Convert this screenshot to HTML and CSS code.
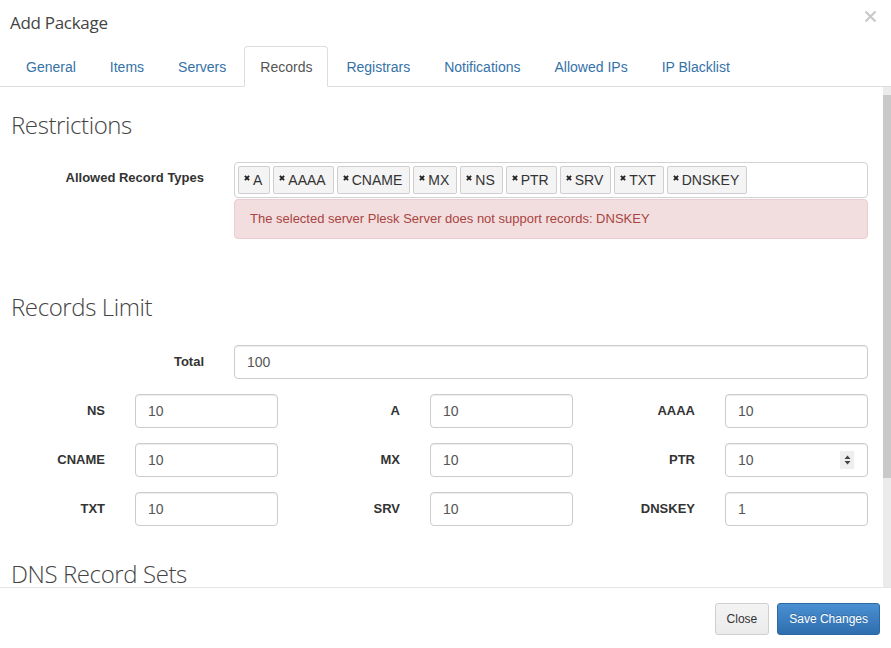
FILE: index.html
```html
<!DOCTYPE html>
<html lang="en">
<head>
<meta charset="utf-8">
<title>Add Package</title>
<link rel="stylesheet" href="styles.css">
</head>
<body>
<div class="modal">
  <header class="modal-header">
    <div class="title-row">
      <h4 class="modal-title">Add Package</h4>
      <button class="close" type="button" aria-label="Close">
        <svg width="13" height="13" viewBox="0 0 13 13"><path d="M1.5 1.5L11.5 11.5M11.5 1.5L1.5 11.5" stroke="#c9c9c9" stroke-width="2.2" fill="none"/></svg>
      </button>
    </div>
    <ul class="nav-tabs">
      <li><a>General</a></li>
      <li><a>Items</a></li>
      <li><a>Servers</a></li>
      <li class="active"><a>Records</a></li>
      <li><a>Registrars</a></li>
      <li><a>Notifications</a></li>
      <li><a>Allowed IPs</a></li>
      <li><a>IP Blacklist</a></li>
    </ul>
  </header>

  <div class="body-wrap">
    <div class="modal-body">
      <h3 class="section-title first">Restrictions</h3>
      <div class="form-row types-row">
        <label class="control-label">Allowed Record Types</label>
        <div class="field">
          <div class="tag-box">
            <span class="tag"><svg class="tag-x" width="6" height="6" viewBox="0 0 6 6"><path d="M0.9 0.9L5.1 5.1M5.1 0.9L0.9 5.1"/></svg>A</span>
            <span class="tag"><svg class="tag-x" width="6" height="6" viewBox="0 0 6 6"><path d="M0.9 0.9L5.1 5.1M5.1 0.9L0.9 5.1"/></svg>AAAA</span>
            <span class="tag"><svg class="tag-x" width="6" height="6" viewBox="0 0 6 6"><path d="M0.9 0.9L5.1 5.1M5.1 0.9L0.9 5.1"/></svg>CNAME</span>
            <span class="tag"><svg class="tag-x" width="6" height="6" viewBox="0 0 6 6"><path d="M0.9 0.9L5.1 5.1M5.1 0.9L0.9 5.1"/></svg>MX</span>
            <span class="tag"><svg class="tag-x" width="6" height="6" viewBox="0 0 6 6"><path d="M0.9 0.9L5.1 5.1M5.1 0.9L0.9 5.1"/></svg>NS</span>
            <span class="tag"><svg class="tag-x" width="6" height="6" viewBox="0 0 6 6"><path d="M0.9 0.9L5.1 5.1M5.1 0.9L0.9 5.1"/></svg>PTR</span>
            <span class="tag"><svg class="tag-x" width="6" height="6" viewBox="0 0 6 6"><path d="M0.9 0.9L5.1 5.1M5.1 0.9L0.9 5.1"/></svg>SRV</span>
            <span class="tag"><svg class="tag-x" width="6" height="6" viewBox="0 0 6 6"><path d="M0.9 0.9L5.1 5.1M5.1 0.9L0.9 5.1"/></svg>TXT</span>
            <span class="tag"><svg class="tag-x" width="6" height="6" viewBox="0 0 6 6"><path d="M0.9 0.9L5.1 5.1M5.1 0.9L0.9 5.1"/></svg>DNSKEY</span>
          </div>
          <div class="alert">The selected server Plesk Server does not support records: DNSKEY</div>
        </div>
      </div>

      <h3 class="section-title second">Records Limit</h3>
      <div class="form-row">
        <label class="control-label">Total</label>
        <div class="field"><input class="form-control" type="text" value="100"></div>
      </div>
      <div class="grid-row">
        <div class="cell"><label class="control-label">NS</label><input class="form-control" type="text" value="10"></div>
        <div class="cell"><label class="control-label">A</label><input class="form-control" type="text" value="10"></div>
        <div class="cell"><label class="control-label">AAAA</label><input class="form-control" type="text" value="10"></div>
      </div>
      <div class="grid-row">
        <div class="cell"><label class="control-label">CNAME</label><input class="form-control" type="text" value="10"></div>
        <div class="cell"><label class="control-label">MX</label><input class="form-control" type="text" value="10"></div>
        <div class="cell"><label class="control-label">PTR</label>
          <div class="spin-wrap"><input class="form-control" type="text" value="10">
            <span class="spinner"><svg width="7" height="10" viewBox="0 0 7 10"><path d="M3.5 0.5L6.5 4H0.5Z M0.5 6H6.5L3.5 9.5Z" fill="#444"/></svg></span>
          </div>
        </div>
      </div>
      <div class="grid-row">
        <div class="cell"><label class="control-label">TXT</label><input class="form-control" type="text" value="10"></div>
        <div class="cell"><label class="control-label">SRV</label><input class="form-control" type="text" value="10"></div>
        <div class="cell"><label class="control-label">DNSKEY</label><input class="form-control" type="text" value="1"></div>
      </div>

      <h3 class="section-title third">DNS Record Sets</h3>
    </div>
    <div class="scrollbar"><div class="thumb"></div></div>
  </div>

  <footer class="modal-footer">
    <button class="btn btn-default" type="button">Close</button>
    <button class="btn btn-primary" type="button">Save Changes</button>
  </footer>
</div>
</body>
</html>
```
FILE: styles.css
```css
* { box-sizing: border-box; }

html, body {
  margin: 0;
  padding: 0;
  background: #fff;
}

body {
  font-family: "Liberation Sans", Arial, sans-serif;
  font-size: 14px;
  line-height: 20px;
  color: #333;
}

.modal {
  width: 891px;
  height: 648px;
  display: flex;
  flex-direction: column;
  background: #fff;
}

/* Header */
.modal-header {
  padding: 10px 0 0 0;
}

.title-row {
  display: flex;
  justify-content: space-between;
  align-items: flex-start;
  padding: 0 14px 0 10px;
}

.modal-title {
  margin: 0;
  font-family: "Open Sans", "Liberation Sans", sans-serif;
  font-weight: 400;
  font-size: 17px;
  letter-spacing: -0.3px;
  line-height: 26px;
  color: #444;
}

.close {
  border: 0;
  background: none;
  padding: 0;
  margin: 0;
  width: 13px;
  height: 13px;
  display: block;
  cursor: pointer;
}
.close svg { display: block; }

.nav-tabs {
  list-style: none;
  margin: 10px 0 0 0;
  padding: 0 0 0 10px;
  display: flex;
  border-bottom: 1px solid #ddd;
}

.nav-tabs li {
  margin: 0 2px -1px 0;
}

.nav-tabs a {
  display: block;
  padding: 10px 15px 9px;
  border: 1px solid transparent;
  border-radius: 4px 4px 0 0;
  color: #3572a8;
  line-height: 20px;
  font-size: 14px;
}

.nav-tabs li.active a {
  color: #555;
  background: #fff;
  border-color: #ddd #ddd transparent;
}

/* Body */
.body-wrap {
  display: flex;
  height: 500px;
  overflow: hidden;
}

.modal-body {
  flex: 1;
  overflow: hidden;
}

.scrollbar {
  width: 8px;
  background: #ebebeb;
  flex: none;
}

.thumb {
  margin-top: 8px;
  height: 383px;
  background: #c9c9c9;
}

.section-title {
  margin: 0;
  padding-left: 11px;
  font-family: "Open Sans", "Liberation Sans", sans-serif;
  font-weight: 300;
  font-size: 24px;
  letter-spacing: -0.4px;
  line-height: 26px;
  color: #444;
}

.section-title.first { margin: 25px 0 24px; }
.section-title.second { margin: 55px 0 25px; }
.section-title.third { margin: 35px 0 0; }

.form-row {
  display: grid;
  grid-template-columns: 204px 1fr;
  column-gap: 30px;
  padding-right: 15px;
  margin-bottom: 15px;
}

.control-label {
  font-weight: bold;
  font-size: 13px;
  line-height: 20px;
  text-align: right;
  padding-top: 7px;
  color: #333;
}

.types-row .control-label { padding-top: 6px; }

.tag-box {
  display: flex;
  flex-wrap: wrap;
  gap: 3px;
  padding: 3px;
  border: 1px solid #d2d2d2;
  border-radius: 4px;
  background: #fff;
}

.tag {
  display: flex;
  align-items: center;
  height: 28px;
  padding: 0 7px 0 5px;
  border: 1px solid #cfcfcf;
  border-radius: 2px;
  background: #f4f4f4;
  color: #333;
  font-size: 14px;
}

.tag-x {
  display: block;
  margin: 0 3px 5px 0;
  stroke: #222;
  stroke-width: 1.9;
  fill: none;
}

.alert {
  margin-top: 1px;
  padding: 10px 15px;
  background: #f2dede;
  border: 1px solid #ebccd1;
  border-radius: 4px;
  color: #a94442;
  font-size: 13px;
  line-height: 18px;
}

.form-control {
  display: block;
  width: 100%;
  height: 34px;
  padding: 6px 12px;
  font: inherit;
  font-size: 14px;
  line-height: 20px;
  color: #555;
  background: #fff;
  border: 1px solid #ccc;
  border-radius: 4px;
  box-shadow: inset 0 1px 1px rgba(0,0,0,.075);
  outline: none;
}

.grid-row {
  display: grid;
  grid-template-columns: repeat(3, 278px);
  column-gap: 17px;
  margin-bottom: 15px;
}

.cell {
  display: grid;
  grid-template-columns: 105px 1fr;
  column-gap: 30px;
}

.spin-wrap {
  position: relative;
}

.spinner {
  position: absolute;
  right: 14px;
  top: 8px;
  width: 14px;
  height: 18px;
  background: #efefef;
  display: flex;
  align-items: center;
  justify-content: center;
}
.spinner svg { display: block; }

/* Footer */
.modal-footer {
  border-top: 1px solid #e5e5e5;
  padding: 15px 11px 0 0;
  display: flex;
  justify-content: flex-end;
  gap: 8px;
  flex: 1;
  align-items: flex-start;
}

.btn {
  font-family: "Liberation Sans", Arial, sans-serif;
  font-size: 12px;
  line-height: 18px;
  padding: 6px 11px;
  border-radius: 3px;
  border: 1px solid;
  height: 32px;
  cursor: pointer;
}

.btn-default {
  background: linear-gradient(#f3f3f3, #ebebeb);
  border-color: #cfcfcf;
  color: #333;
}

.btn-primary {
  background: linear-gradient(#4a90d3, #2f6eae);
  border-color: #2c68a3;
  color: #fff;
  text-shadow: 0 -1px 0 rgba(0,0,0,.2);
}
```
